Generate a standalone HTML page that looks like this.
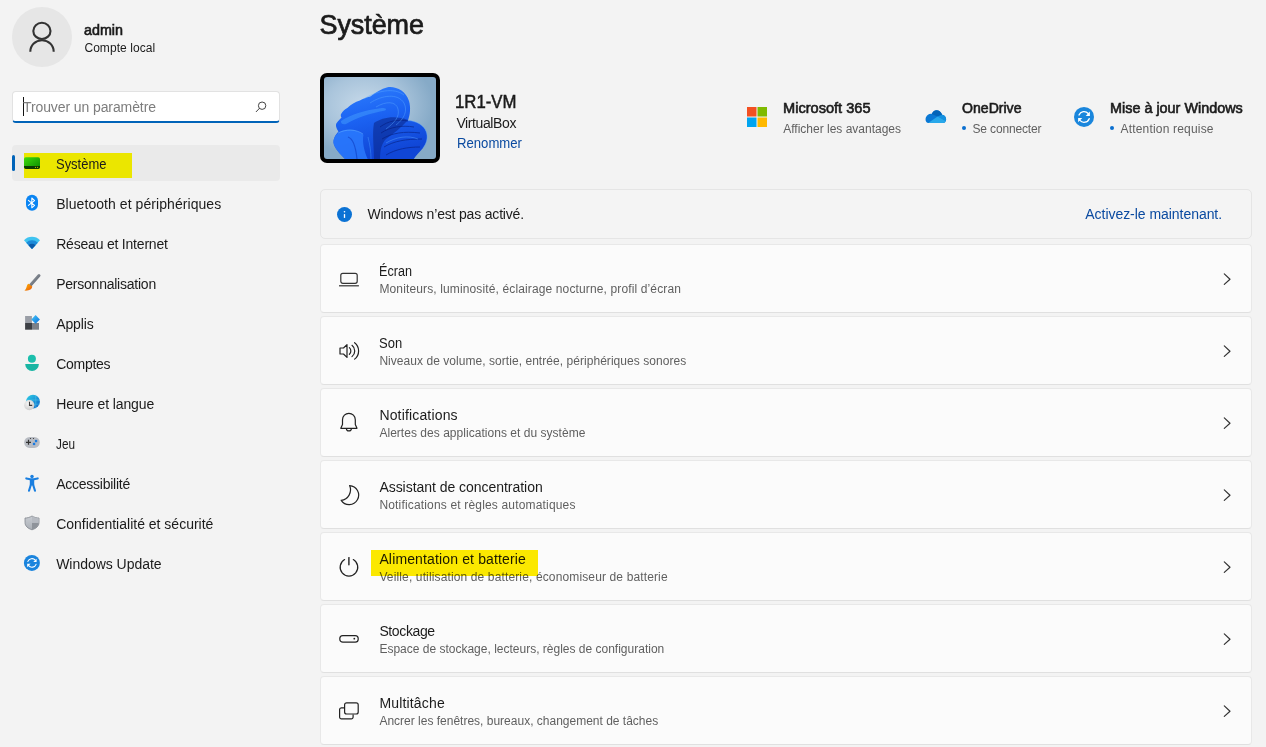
<!DOCTYPE html>
<html><head><meta charset="utf-8">
<style>
html,body{margin:0;padding:0;}
body{width:1266px;height:747px;overflow:hidden;background:#f3f3f3;position:relative;font-family:"Liberation Sans",sans-serif;}
.t{position:absolute;white-space:nowrap;}
.a{position:absolute;}
.card{position:absolute;left:320px;width:930px;height:67px;background:#fbfbfb;border:1px solid #e8e8e8;border-bottom-color:#e0e0e0;border-radius:4px;}
svg{position:absolute;overflow:visible;}
</style></head><body>

<!-- avatar -->
<div class="a" style="left:12px;top:7px;width:60px;height:60px;border-radius:50%;background:#e6e6e6;"></div>
<svg style="left:0;top:0" width="80" height="70"><g fill="none" stroke="#333" stroke-width="2.1"><ellipse cx="41.9" cy="30.9" rx="8.6" ry="8.1"/><path d="M30.3 51.8 A11.7 11.6 0 0 1 53.7 51.8"/></g></svg>

<!-- search -->
<div class="a" style="left:12px;top:91px;width:266px;height:29px;background:#fff;border:1px solid #e2e2e2;border-bottom:2px solid #0063b8;border-radius:4px;"></div>
<div class="a" style="left:23px;top:97px;width:1px;height:19px;background:#111;"></div>
<svg style="left:250px;top:96px" width="22" height="22"><g fill="none" stroke="#444" stroke-width="1.0"><circle cx="12.1" cy="9.7" r="3.7"/><path d="M9.4 12.4 L6.2 15.7" stroke-linecap="round"/></g></svg>

<!-- selected nav -->
<div class="a" style="left:12px;top:145px;width:268px;height:36px;background:#eaeaea;border-radius:4px;"></div>
<div class="a" style="left:12px;top:155px;width:3px;height:16px;background:#0063b8;border-radius:2px;"></div>
<div class="a" style="left:24px;top:153px;width:108px;height:25px;background:#ebe600;"></div>

<!-- nav icons -->
<svg style="left:20px;top:152px" width="24" height="24">
 <defs><linearGradient id="gsys" x1="0" y1="0" x2="1" y2="1"><stop offset="0" stop-color="#3fdc0c"/><stop offset="1" stop-color="#0a8a00"/></linearGradient></defs>
 <rect x="4" y="5.2" width="16" height="11.7" rx="1.8" fill="url(#gsys)"/>
 <path d="M4 13.9 H20 V15.1 A1.8 1.8 0 0 1 18.2 16.9 H5.8 A1.8 1.8 0 0 1 4 15.1 Z" fill="#0b3a02"/>
 <circle cx="15.5" cy="15.3" r="0.6" fill="#c8c400"/><circle cx="17.6" cy="15.3" r="0.6" fill="#c8c400"/>
</svg>
<svg style="left:20px;top:192px" width="24" height="24">
 <rect x="6" y="2.7" width="12" height="16" rx="6" fill="#0a84f2"/>
 <path d="M8.4 8.4 L14.6 13.4 L11.8 15.8 V6 L14.6 8.6 L8.4 13.4" fill="none" stroke="#fff" stroke-width="1.05" stroke-linejoin="round" stroke-linecap="round"/>
</svg>
<svg style="left:20px;top:232px" width="24" height="24">
 <path d="M4 8.3 A11 11 0 0 1 20 8.3 L12 17 Z" fill="#3fc3f0"/>
 <path d="M6.2 10.7 A8 8 0 0 1 17.8 10.7 L12 17 Z" fill="#1c8ad8"/>
 <path d="M8.5 13.2 A5 5 0 0 1 15.5 13.2 L12 17 Z" fill="#0b5aa8"/>
</svg>
<svg style="left:20px;top:272px" width="24" height="24">
 <defs><linearGradient id="gbr" x1="0" y1="0" x2="1" y2="1"><stop offset="0" stop-color="#9aa0a8"/><stop offset="1" stop-color="#555c66"/></linearGradient>
 <linearGradient id="gor" x1="0" y1="0" x2="1" y2="1"><stop offset="0" stop-color="#ffb900"/><stop offset="1" stop-color="#e8540e"/></linearGradient></defs>
 <path d="M19 3.5 L10.6 12.9" stroke="url(#gbr)" stroke-width="3" stroke-linecap="round"/>
 <path d="M8.6 11.8 L12.3 14.6 C12 17.6 9.5 18.9 4.4 18.6 C5.8 17.6 6.3 15.8 6.8 14.2 C7.2 12.8 7.8 12.1 8.6 11.8 Z" fill="url(#gor)"/>
</svg>
<svg style="left:20px;top:312px" width="24" height="24">
 <defs><linearGradient id="gdia" x1="0" y1="0" x2="1" y2="1"><stop offset="0" stop-color="#45c8f8"/><stop offset="1" stop-color="#0a6fdc"/></linearGradient></defs>
 <rect x="5.1" y="4" width="6.8" height="7" fill="#9a9ea6"/>
 <rect x="5.1" y="11" width="6.9" height="6.7" fill="#3c3f44"/>
 <rect x="12" y="11" width="7" height="6.7" fill="#7c8088"/>
 <path d="M15.6 3.1 L19.9 7.4 L15.6 11.7 L11.3 7.4 Z" fill="url(#gdia)"/>
</svg>
<svg style="left:20px;top:352px" width="24" height="24">
 <circle cx="11.9" cy="6.75" r="4" fill="#1cbfac"/>
 <path d="M5.3 11.9 H18.8 V12.6 A6.75 6.4 0 0 1 5.3 12.6 Z" fill="#19b5a3"/>
</svg>
<svg style="left:20px;top:392px" width="24" height="24">
 <defs><linearGradient id="ggl" x1="0" y1="0" x2="1" y2="1"><stop offset="0" stop-color="#2fd0e6"/><stop offset="1" stop-color="#0a5ec8"/></linearGradient>
 <radialGradient id="gcl" cx="0.4" cy="0.35" r="0.7"><stop offset="0" stop-color="#f6f6f6"/><stop offset="1" stop-color="#c9c9c9"/></radialGradient></defs>
 <circle cx="13" cy="9.7" r="6.9" fill="url(#ggl)"/>
 <path d="M6 8 H20 M15.8 2.8 V16.5 M12 12.2 H20" stroke="#5fd8f0" stroke-width="0.7" opacity="0.6"/>
 <circle cx="9.3" cy="13.2" r="5.1" fill="url(#gcl)"/>
 <path d="M9.5 9.8 V13.4 H12.2" fill="none" stroke="#3a3a3a" stroke-width="1.1"/>
</svg>
<svg style="left:20px;top:432px" width="24" height="24">
 <rect x="4.2" y="5" width="15.6" height="10.9" rx="5.4" fill="#b8bcc3"/>
 <path d="M6 10.3 H11 M8.5 7.8 V12.8" stroke="#333" stroke-width="1.2"/>
 <rect x="14.9" y="7.9" width="2.3" height="2.3" fill="#1a7be0"/>
 <rect x="12.9" y="10.8" width="2.3" height="2.3" fill="#1a7be0"/>
 <circle cx="10.5" cy="6.5" r="0.6" fill="#333"/><circle cx="13.5" cy="6.5" r="0.6" fill="#333"/>
</svg>
<svg style="left:20px;top:472px" width="24" height="24">
 <g fill="#1a7fe0" stroke="#1a7fe0" stroke-linecap="round" stroke-linejoin="round">
 <circle cx="12" cy="4.4" r="1.75" stroke="none"/>
 <path d="M6.3 6.4 L10.2 7.3 H13.8 L17.7 6.4" fill="none" stroke-width="2.1"/>
 <path d="M9.8 7.2 H14.2 V13.4 H9.8 Z" stroke="none"/>
 <path d="M10.8 13 L9 18.7 M13.2 13 L15 18.7" fill="none" stroke-width="2.1"/>
 </g>
</svg>
<svg style="left:20px;top:512px" width="24" height="24">
 <defs><linearGradient id="gsh" x1="0" y1="0" x2="0" y2="1"><stop offset="0" stop-color="#c8ccd2"/><stop offset="1" stop-color="#a9aeb5"/></linearGradient></defs>
 <path d="M12 4 C9.6 5.4 7.5 6 5 6 V10.5 C5 14 8 16.6 12 17.8 C16 16.6 19 14 19 10.5 V6 C16.5 6 14.4 5.4 12 4 Z" fill="url(#gsh)" stroke="#80858d" stroke-width="0.8"/>
 <path d="M12 10.8 H18.6 C18.4 14 15.8 16.5 12 17.6 Z" fill="#8e939a"/>
 <path d="M12 4.4 V10.8 H18.6 V6.3 C16.4 6.2 14.2 5.6 12 4.4 Z" fill="#b6bac1"/>
</svg>
<svg style="left:20px;top:552px" width="24" height="24">
 <circle cx="11.9" cy="10.9" r="8" fill="#1a84dd"/>
 <g fill="none" stroke="#fff" stroke-width="1.15" stroke-linecap="round">
 <path d="M7.90 9.38 A4.4 4.4 0 0 1 15.26 8.18"/>
 <path d="M16.06 12.34 A4.4 4.4 0 0 1 8.62 13.70"/>
 </g>
 <path d="M16.62 6.66 L16.62 10.10 L13.26 10.10 Z" fill="#fff"/>
 <path d="M7.18 15.14 L7.18 11.70 L10.54 11.70 Z" fill="#fff"/>
</svg>

<!-- thumbnail -->
<div class="a" style="left:320px;top:73px;width:120px;height:90px;background:#000;border-radius:7px;"></div>
<svg style="left:324px;top:77px" width="112" height="82" viewBox="0 0 112 82">
 <defs>
  <clipPath id="cth"><rect x="0" y="0" width="112" height="82" rx="3"/></clipPath>
  <radialGradient id="gbg" cx="0.36" cy="0.34" r="0.62"><stop offset="0" stop-color="#c6d9e9"/><stop offset="0.55" stop-color="#a9c4db"/><stop offset="1" stop-color="#86aac7"/></radialGradient>
  <linearGradient id="gbl" x1="0" y1="0" x2="0.3" y2="1"><stop offset="0" stop-color="#2f80ff"/><stop offset="0.5" stop-color="#1b62f2"/><stop offset="1" stop-color="#1046d6"/></linearGradient>
 </defs>
 <g clip-path="url(#cth)">
  <rect width="112" height="82" fill="url(#gbg)"/>
  <path d="M63.6 10.2 C72 9 82 14 85 24 C87 31 86 38 84 43.5 C92 44 100 48 102.3 55 C104 60 103 66 99 71 C96 75 92 78 89.8 82 L21 82 C16 77 10 71 9.4 65.3 C9.5 60 13 56 14.4 54.4 C12 51 11.5 48 12.3 46.4 C14 44 16 42 17.5 40.7 C16.5 39 16.8 38 16.9 37.2 C19 34 21 32 23.3 30.9 C27 27 31 25 35.9 23.4 C39 21.5 42 20.5 46.3 19.4 C52 15 57 12 63.6 10.2 Z" fill="url(#gbl)"/>
  <path d="M17 44 C26 38 40 33 58 31 C62 31 63 32 61 33.5 C48 36 34 40 22 47 C19 48 16.5 46.5 17 44 Z" fill="#4aa4ff" opacity="0.45"/>
  <path d="M50 46 C58 40 72 38 84 43 C78 50 70 56 62 62 C58 66 56 72 56 82 L50 82 C50 70 48 56 50 46 Z" fill="#0a2486" opacity="0.55"/>
  <g fill="none" stroke="#061c78" stroke-width="1" opacity="0.55">
   <path d="M56 50 C64 44 74 42 84 44"/>
   <path d="M57 56 C66 50 78 48 90 50"/>
   <path d="M58 62 C68 56 80 54 96 56"/>
   <path d="M60 70 C70 64 82 62 98 62"/>
   <path d="M62 78 C72 72 84 70 96 70"/>
  </g>
  <g fill="none" stroke="#5aa8ff" stroke-width="0.8" opacity="0.55">
   <path d="M40 22 C52 14 70 10 80 18"/>
   <path d="M46 26 C58 18 74 16 80 26 C84 34 80 42 72 48"/>
   <path d="M52 30 C62 24 72 24 74 32 C76 40 70 46 62 52"/>
   <path d="M84 43.5 C92 44 100 48 102.3 55 C104 60 103 66 99 71"/>
   <path d="M62 66 C72 60 84 58 94 62"/>
  </g>
  <path d="M9.4 65.3 C9.5 60 13 56 18.6 53.6 C26 51 34 53 39.5 57.7 C38 64 40 74 43.7 82 L21 82 C16 77 10 71 9.4 65.3 Z" fill="#2c7cff" opacity="0.8"/>
  <path d="M24 60 C30 62 32 72 33 82" fill="none" stroke="#0d3cc0" stroke-width="1.2" opacity="0.6"/>
  <path d="M14 56 C22 52 32 52 39 57" fill="none" stroke="#6ab6ff" stroke-width="0.8" opacity="0.6"/>
  <path d="M44 60 C46 68 47 75 47 82" fill="none" stroke="#4a9cff" stroke-width="0.9" opacity="0.5"/>
 </g>
</svg>

<!-- header icons -->
<svg style="left:747px;top:107px" width="20" height="20">
 <rect x="0" y="0" width="9.5" height="9.5" fill="#f25022"/>
 <rect x="10.5" y="0" width="9.5" height="9.5" fill="#7fba00"/>
 <rect x="0" y="10.5" width="9.5" height="9.5" fill="#00a4ef"/>
 <rect x="10.5" y="10.5" width="9.5" height="9.5" fill="#ffb900"/>
</svg>
<svg style="left:924px;top:106px" width="24" height="20">
 <path d="M4.2 17.1 C1.6 17 1 13.2 2.1 11.1 C3 9.1 5.2 7.5 7.7 7.9 C9 5.2 10.9 4.2 12.3 4.2 C15.1 4.2 17.3 6 18.1 8.7 C20.9 9.1 22.3 11.3 22.1 13.5 C21.9 15.8 20.7 17.1 19.1 17.1 Z" fill="#0a78d4"/>
 <path d="M7.7 7.9 C9 5.2 10.9 4.2 12.3 4.2 C15.1 4.2 17.3 6 18.1 8.7 L13.6 10.5 Z" fill="#0364b8"/>
 <path d="M13.6 10.5 L18.1 8.7 C20.9 9.1 22.3 11.3 22.1 13.5 C22 14.2 21.9 14.7 21.7 15.1 Z" fill="#1490df"/>
 <path d="M4.2 17.1 L13.6 10.5 L21.7 15.1 C21.3 16.3 20.4 17.1 19.1 17.1 Z" fill="#28a8ea"/>
</svg>
<div class="a" style="left:962px;top:126px;width:4px;height:4px;border-radius:50%;background:#0a6fd0;"></div>
<div class="a" style="left:1110px;top:126px;width:4px;height:4px;border-radius:50%;background:#0a6fd0;"></div>
<svg style="left:1074px;top:107px" width="20" height="20">
 <circle cx="10" cy="9.9" r="10" fill="#1a86dc"/>
 <g fill="none" stroke="#fff" stroke-width="1.35" stroke-linecap="round">
 <path d="M5 8 A5.5 5.5 0 0 1 14.2 6.5"/>
 <path d="M15.2 11.7 A5.5 5.5 0 0 1 5.9 13.4"/>
 </g>
 <path d="M15.9 4.6 V8.9 H11.7 Z" fill="#fff"/>
 <path d="M4.1 15.2 V10.9 H8.3 Z" fill="#fff"/>
</svg>

<!-- activation banner -->
<div class="a" style="left:320px;top:189px;width:930px;height:48px;background:#f4f4f4;border:1px solid #e5e5e5;border-radius:5px;"></div>
<svg style="left:334px;top:204px" width="22" height="22">
 <circle cx="10.5" cy="10.5" r="7.5" fill="#0b72d4"/>
 <rect x="9.85" y="10.1" width="1.3" height="3.8" fill="#fff"/>
 <circle cx="10.5" cy="7.7" r="0.8" fill="#fff"/>
</svg>

<!-- cards -->
<div class="card" style="top:244px"></div>
<div class="card" style="top:316px"></div>
<div class="card" style="top:388px"></div>
<div class="card" style="top:460px"></div>
<div class="card" style="top:532px"></div>
<div class="card" style="top:604px"></div>
<div class="card" style="top:676px"></div>

<!-- card icons -->
<svg style="left:334px;top:264px" width="30" height="30"><g fill="none" stroke="#333" stroke-width="1.2">
 <rect x="6.8" y="9.3" width="16.4" height="10" rx="2"/><path d="M5 21.8 H24.9"/></g></svg>
<svg style="left:334px;top:336px" width="30" height="30"><g fill="none" stroke="#222" stroke-width="1.2" stroke-linejoin="round" stroke-linecap="round">
 <path d="M6 12 H9.5 L13 8.6 V21.4 L9.5 18 H6 Z"/>
 <path d="M15.4 11.6 A4.6 4.6 0 0 1 15.4 18.3"/>
 <path d="M18 9.3 A7.2 7.2 0 0 1 18 20.6"/>
 <path d="M20.6 6.7 A10.4 10.4 0 0 1 20.6 23.1"/></g></svg>
<svg style="left:334px;top:408px" width="30" height="30"><g fill="none" stroke="#222" stroke-width="1.2" stroke-linejoin="round">
 <path d="M6.8 20.3 L8.5 16.5 V11.7 A6.4 6.4 0 0 1 21.3 11.7 V16.5 L23 20.3 Z"/>
 <path d="M12.4 20.4 A2.5 2.5 0 0 0 17.4 20.4"/></g></svg>
<svg style="left:334px;top:480px" width="30" height="30"><g fill="none" stroke="#222" stroke-width="1.2" stroke-linejoin="round">
 <path d="M15.6 5.6 A9.5 9.5 0 1 1 7.2 20.3 A10.5 10.5 0 0 0 15.6 5.6 Z"/></g></svg>
<svg style="left:334px;top:552px" width="30" height="30"><g fill="none" stroke="#222" stroke-width="1.2" stroke-linecap="round">
 <path d="M10.6 7.6 A8.8 8.8 0 1 0 19.3 7.6"/><path d="M14.9 5.6 V12.8" stroke-width="1.4"/></g></svg>
<svg style="left:334px;top:624px" width="30" height="30"><g fill="none" stroke="#222" stroke-width="1.2">
 <rect x="5.8" y="11.6" width="18.4" height="6.6" rx="3"/></g><circle cx="20.3" cy="14.7" r="0.9" fill="#222"/></svg>
<svg style="left:334px;top:696px" width="30" height="30"><g fill="none" stroke="#222" stroke-width="1.2" stroke-linejoin="round">
 <path d="M10.3 11.8 H7.3 A1.8 1.8 0 0 0 5.6 13.6 V21.1 A1.8 1.8 0 0 0 7.4 22.9 H17.3 A1.8 1.8 0 0 0 19.1 21.1 V18.4"/>
 <rect x="10.6" y="6.8" width="13.6" height="11.2" rx="2"/></g></svg>

<!-- chevrons -->
<svg style="left:1218px;top:264px" width="20" height="500"><g fill="none" stroke="#333" stroke-width="1.2" stroke-linecap="round" stroke-linejoin="round">
 <path d="M6.3 9.9 L12 15.2 L6.3 20.4"/>
 <path d="M6.3 81.9 L12 87.2 L6.3 92.4"/>
 <path d="M6.3 153.9 L12 159.2 L6.3 164.4"/>
 <path d="M6.3 225.9 L12 231.2 L6.3 236.4"/>
 <path d="M6.3 297.9 L12 303.2 L6.3 308.4"/>
 <path d="M6.3 369.9 L12 375.2 L6.3 380.4"/>
 <path d="M6.3 441.9 L12 447.2 L6.3 452.4"/>
</g></svg>

<div class="t" style="left:84.4px;top:23px;font-size:14px;line-height:14px;color:#1b1b1b;transform:scaleX(1.0228);transform-origin:0 0;-webkit-text-stroke:0.6px #1b1b1b;">admin</div>
<div class="t" style="left:84.4px;top:42px;font-size:12px;line-height:12px;color:#1b1b1b;letter-spacing:0.070px;">Compte local</div>
<div class="t" style="left:23.0px;top:100px;font-size:14px;line-height:14px;color:#7d7d7d;letter-spacing:-0.099px;">Trouver un paramètre</div>
<div class="t" style="left:56.2px;top:157px;font-size:14px;line-height:14px;color:#1b1b1b;transform:scaleX(0.9254);transform-origin:0 0;">Système</div>
<div class="t" style="left:56.2px;top:197px;font-size:14px;line-height:14px;color:#1b1b1b;letter-spacing:0.062px;">Bluetooth et périphériques</div>
<div class="t" style="left:56.2px;top:237px;font-size:14px;line-height:14px;color:#1b1b1b;letter-spacing:-0.205px;">Réseau et Internet</div>
<div class="t" style="left:56.2px;top:277px;font-size:14px;line-height:14px;color:#1b1b1b;letter-spacing:-0.234px;">Personnalisation</div>
<div class="t" style="left:56.2px;top:317px;font-size:14px;line-height:14px;color:#1b1b1b;letter-spacing:-0.126px;">Applis</div>
<div class="t" style="left:56.2px;top:357px;font-size:14px;line-height:14px;color:#1b1b1b;letter-spacing:-0.270px;">Comptes</div>
<div class="t" style="left:56.2px;top:397px;font-size:14px;line-height:14px;color:#1b1b1b;letter-spacing:-0.116px;">Heure et langue</div>
<div class="t" style="left:56.2px;top:437px;font-size:14px;line-height:14px;color:#1b1b1b;transform:scaleX(0.8417);transform-origin:0 0;">Jeu</div>
<div class="t" style="left:56.2px;top:477px;font-size:14px;line-height:14px;color:#1b1b1b;letter-spacing:-0.252px;">Accessibilité</div>
<div class="t" style="left:56.2px;top:517px;font-size:14px;line-height:14px;color:#1b1b1b;">Confidentialité et sécurité</div>
<div class="t" style="left:56.2px;top:557px;font-size:14px;line-height:14px;color:#1b1b1b;letter-spacing:-0.033px;">Windows Update</div>
<div class="t" style="left:319.5px;top:12px;font-size:27px;line-height:27px;color:#1b1b1b;letter-spacing:-0.089px;-webkit-text-stroke:0.7px #1b1b1b;">Système</div>
<div class="t" style="left:455.0px;top:93px;font-size:18px;line-height:18px;color:#1b1b1b;transform:scaleX(0.9316);transform-origin:0 0;-webkit-text-stroke:0.5px #1b1b1b;">1R1-VM</div>
<div class="t" style="left:456.4px;top:116px;font-size:14px;line-height:14px;color:#1b1b1b;letter-spacing:-0.395px;">VirtualBox</div>
<div class="t" style="left:456.7px;top:136px;font-size:14px;line-height:14px;color:#0a4aa0;transform:scaleX(0.9387);transform-origin:0 0;">Renommer</div>
<div class="t" style="left:782.6px;top:101px;font-size:14px;line-height:14px;color:#1b1b1b;transform:scaleX(1.0412);transform-origin:0 0;-webkit-text-stroke:0.6px #1b1b1b;">Microsoft 365</div>
<div class="t" style="left:783.2px;top:123px;font-size:12px;line-height:12px;color:#5f5f5f;">Afficher les avantages</div>
<div class="t" style="left:962.3px;top:101px;font-size:14px;line-height:14px;color:#1b1b1b;transform:scaleX(1.0062);transform-origin:0 0;-webkit-text-stroke:0.6px #1b1b1b;">OneDrive</div>
<div class="t" style="left:972.5px;top:123px;font-size:12px;line-height:12px;color:#5f5f5f;letter-spacing:-0.156px;">Se connecter</div>
<div class="t" style="left:1109.5px;top:101px;font-size:14px;line-height:14px;color:#1b1b1b;transform:scaleX(1.0283);transform-origin:0 0;-webkit-text-stroke:0.6px #1b1b1b;">Mise à jour Windows</div>
<div class="t" style="left:1120.5px;top:123px;font-size:12px;line-height:12px;color:#5f5f5f;letter-spacing:0.184px;">Attention requise</div>
<div class="t" style="left:367.4px;top:207px;font-size:14px;line-height:14px;color:#1b1b1b;letter-spacing:-0.182px;">Windows n’est pas activé.</div>
<div class="t" style="left:1085.3px;top:207px;font-size:14px;line-height:14px;color:#0a4aa0;letter-spacing:-0.044px;">Activez-le maintenant.</div>
<div class="t" style="left:379.4px;top:264px;font-size:14px;line-height:14px;color:#1b1b1b;transform:scaleX(0.9023);transform-origin:0 0;">Écran</div>
<div class="t" style="left:379.4px;top:283px;font-size:12px;line-height:12px;color:#5f5f5f;letter-spacing:0.131px;">Moniteurs, luminosité, éclairage nocturne, profil d’écran</div>
<div class="t" style="left:379.4px;top:336px;font-size:14px;line-height:14px;color:#1b1b1b;transform:scaleX(0.9273);transform-origin:0 0;">Son</div>
<div class="t" style="left:379.4px;top:355px;font-size:12px;line-height:12px;color:#5f5f5f;letter-spacing:0.048px;">Niveaux de volume, sortie, entrée, périphériques sonores</div>
<div class="t" style="left:379.4px;top:408px;font-size:14px;line-height:14px;color:#1b1b1b;letter-spacing:0.162px;">Notifications</div>
<div class="t" style="left:379.4px;top:427px;font-size:12px;line-height:12px;color:#5f5f5f;letter-spacing:0.033px;">Alertes des applications et du système</div>
<div class="t" style="left:379.4px;top:480px;font-size:14px;line-height:14px;color:#1b1b1b;letter-spacing:-0.036px;">Assistant de concentration</div>
<div class="t" style="left:379.4px;top:499px;font-size:12px;line-height:12px;color:#5f5f5f;letter-spacing:0.169px;">Notifications et règles automatiques</div>
<div class="t" style="left:379.4px;top:552px;font-size:14px;line-height:14px;color:#1b1b1b;letter-spacing:0.144px;">Alimentation et batterie</div>
<div class="t" style="left:379.4px;top:571px;font-size:12px;line-height:12px;color:#5f5f5f;letter-spacing:0.134px;">Veille, utilisation de batterie, économiseur de batterie</div>
<div class="t" style="left:379.4px;top:624px;font-size:14px;line-height:14px;color:#1b1b1b;letter-spacing:-0.382px;">Stockage</div>
<div class="t" style="left:379.4px;top:643px;font-size:12px;line-height:12px;color:#5f5f5f;">Espace de stockage, lecteurs, règles de configuration</div>
<div class="t" style="left:379.4px;top:696px;font-size:14px;line-height:14px;color:#1b1b1b;letter-spacing:0.166px;">Multitâche</div>
<div class="t" style="left:379.4px;top:715px;font-size:12px;line-height:12px;color:#5f5f5f;">Ancrer les fenêtres, bureaux, changement de tâches</div>

<!-- highlight over Alimentation -->
<div class="a" style="left:371px;top:550px;width:167px;height:26px;background:#ffec00;mix-blend-mode:multiply;"></div>
</body></html>
